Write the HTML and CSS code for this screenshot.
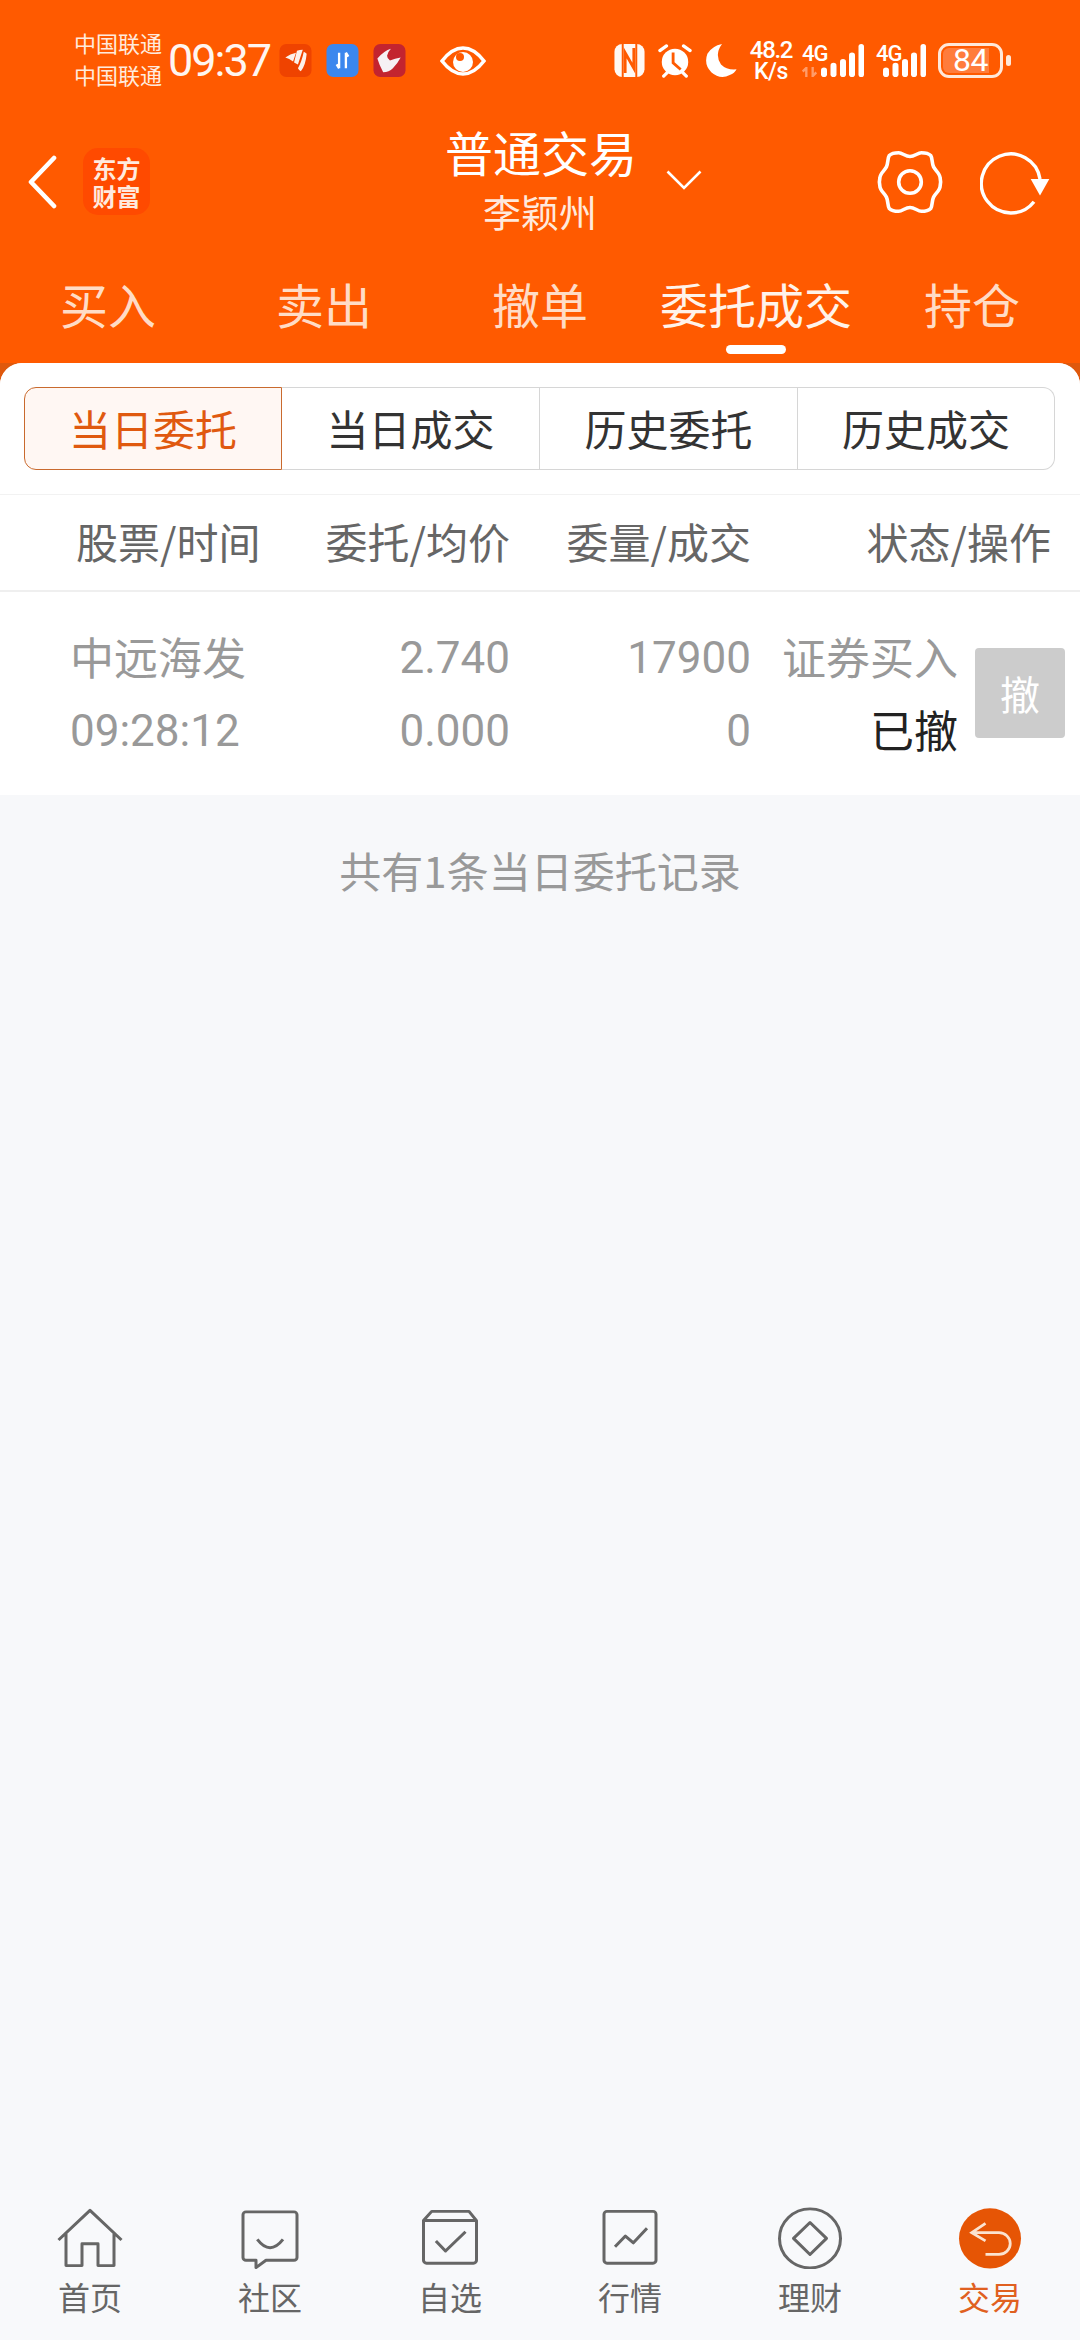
FILE: index.html
```html
<!DOCTYPE html>
<html lang="zh-CN">
<head>
<meta charset="utf-8">
<title>普通交易</title>
<link rel="stylesheet" href="styles.css">
</head>
<body>
<div class="app">
  <header class="top">
    <div class="status">
      <div class="carrier"><span>中国联通</span><span>中国联通</span></div>
      <div class="clock">09:37</div>
      <svg class="app-icon first" viewBox="0 0 33 34"><rect width="33" height="34" rx="7" fill="#ef4300"/><path d="M6 14Q11 10 17 9L14 18Q10 15 6 14ZM18 7Q21 6 24 6L19 21Q17 20 15 19ZM25 8Q27 9 28 10 27 22 22 28 20 27 19 25 23 18 25 8Z" fill="#fdf1ea"/></svg>
      <svg class="app-icon" viewBox="0 0 33 34"><rect width="33" height="34" rx="7" fill="#3b87ee"/><path d="M13 9V25M13 25L10.5 21M20 25V9M20 9L22.5 13" stroke="#fff" stroke-width="2.4" fill="none"/></svg>
      <svg class="app-icon" viewBox="0 0 33 34"><rect width="33" height="34" rx="7" fill="#c3242f"/><path d="M18 5Q11 7 4 15 6 22 10 29 16 29 20 25 25 20 28 14 22 15 17 17 14 15 14 12 15 8 18 5Z" fill="#f6f1f4"/></svg>
      <svg class="eye" viewBox="0 0 46 32"><path d="M2 16Q12 3 23 3T44 16Q34 29 23 29T2 16Z" fill="none" stroke="#fff" stroke-width="3.6"/><circle cx="23" cy="17" r="10" fill="#fff"/><circle cx="20" cy="12" r="4" fill="#ff5a00"/></svg>
      <div class="status-right">
        <svg class="nfc" viewBox="0 0 31 34"><rect width="31" height="34" rx="8" fill="#fff8f3"/><path d="M8.5 0V34M22.5 0V34" stroke="#ff5a00" stroke-width="2"/><path d="M11 30V9L20 25V4" stroke="#ff5a00" stroke-width="3" fill="none"/></svg>
        <svg class="alarm" viewBox="0 0 36 36"><circle cx="18" cy="19" r="14" fill="#fff"/><path d="M16 9V20L24 27" stroke="#ff5a00" stroke-width="3" fill="none"/><path d="M2 7L9 2M34 7L27 2M6 34L10 30M30 34L26 30" stroke="#fff" stroke-width="3.4" stroke-linecap="round"/></svg>
        <svg class="moon" viewBox="0 0 33 36"><path d="M17 1Q7 3 2 11 -2 22 6 30 15 38 25 33 30 31 32 27 22 28 16 22 9 12 17 1Z" fill="#fff"/></svg>
        <div class="speed"><span>48.2</span><span>K/s</span></div>
        <div class="signal first-signal">
          <div class="net"><span class="g4">4G</span><svg class="updown" viewBox="0 0 15 11"><path d="M4 11V1L0 5M11 0V10L15 6" stroke="#ff9c6a" stroke-width="2.6" fill="none"/></svg></div>
          <svg class="bars" viewBox="0 0 43 35" preserveAspectRatio="none"><rect y="25" width="6" height="10" rx="3"/><rect x="9.5" y="20" width="6" height="15" rx="3"/><rect x="19" y="16" width="6" height="19" rx="3"/><rect x="28" y="9" width="6" height="26" rx="3"/><rect x="37.500" y="0" width="5.500" height="35" rx="2.700"/></svg>
        </div>
        <div class="signal second-signal">
          <div class="net"><span class="g4">4G</span></div>
          <svg class="bars" viewBox="0 0 43 35" preserveAspectRatio="none"><rect y="25" width="6" height="10" rx="3"/><rect x="9.5" y="20" width="6" height="15" rx="3"/><rect x="19" y="16" width="6" height="19" rx="3"/><rect x="28" y="9" width="6" height="26" rx="3"/><rect x="37.500" y="0" width="5.500" height="35" rx="2.700"/></svg>
        </div>
        <div class="battery"><span>84</span></div>
        <div class="nub"></div>
      </div>
    </div>
    <nav class="bar">
      <div class="bar-left">
        <svg class="back" viewBox="0 0 31 54"><path d="M27 3L4 27L27 51" fill="none" stroke="#fff" stroke-width="4.600" stroke-linecap="round" stroke-linejoin="round"/></svg>
        <div class="logo"><span>东方</span><span>财富</span></div>
      </div>
      <div class="title"><div class="title-main">普通交易</div><div class="title-sub">李颖州</div></div>
      <div class="bar-right">
        <svg class="caret" viewBox="0 0 36 20"><path d="M1.500 1.500L18 18L34.500 1.500" fill="none" stroke="#fff" stroke-width="2.600"/></svg>
        <div class="actions">
          <svg class="gear" viewBox="0 0 70 70"><path d="M35 8C40 8 43 4 47 4C51 4 55 5 57 7C59 10 58 15 60 19C62 23 67 26 67 31C67.500 33 67.500 37 67 39C67 44 62 47 60 51C58 55 59 60 57 63C55 65 51 66 47 66C43 66 40 62 35 62C30 62 27 66 23 66C19 66 15 65 13 63C11 60 12 55 10 51C8 47 3 44 3 39C2.500 37 2.500 33 3 31C3 26 8 23 10 19C12 15 11 10 13 7C15 5 19 4 23 4C27 4 30 8 35 8Z" fill="none" stroke="#fff" stroke-width="3.800" stroke-linejoin="round"/><circle cx="35" cy="35" r="12" fill="none" stroke="#fff" stroke-width="3.800"/></svg>
          <svg class="refresh" viewBox="0 0 74 70"><path d="M54 54.700A29.500 29.500 0 1 1 60 32" fill="none" stroke="#fff" stroke-width="3.400"/><path d="M50.700 32H69.300L60 48.500Z" fill="#fff"/></svg>
        </div>
      </div>
    </nav>
    <div class="tabs">
      <div class="tab">买入</div>
      <div class="tab">卖出</div>
      <div class="tab">撤单</div>
      <div class="tab active">委托成交<i class="marker"></i></div>
      <div class="tab">持仓</div>
    </div>
  </header>

  <main class="under">
    <div class="panel">
      <div class="segment-wrap">
        <div class="segment">
          <div class="seg on">当日委托</div>
          <div class="seg">当日成交</div>
          <div class="seg">历史委托</div>
          <div class="seg">历史成交</div>
        </div>
      </div>
      <div class="thead">
        <div>股票/时间</div>
        <div class="r">委托/均价</div>
        <div class="r">委量/成交</div>
        <div class="r">状态/操作</div>
      </div>
      <div class="trow">
        <div class="cell"><span>中远海发</span><span class="num">09:28:12</span></div>
        <div class="cell r"><span class="num">2.740</span><span class="num">0.000</span></div>
        <div class="cell r"><span class="num">17900</span><span class="num">0</span></div>
        <div class="cell r"><span>证券买入</span><span class="dark">已撤</span></div>
        <div class="cancel">撤</div>
      </div>
      <div class="note">共有1条当日委托记录</div>
    </div>
  </main>

  <footer class="dock">
    <div class="dock-item">
      <svg viewBox="0 0 72 64" preserveAspectRatio="none"><path d="M4.500 34L36 3.500L67.500 34M12 27V60.500H28V38H44V60.500H60V27" class="ln"/></svg>
      <span>首页</span>
    </div>
    <div class="dock-item">
      <svg viewBox="0 0 72 64" preserveAspectRatio="none"><path d="M12 5H60A3 3 0 0 1 63 8V52A3 3 0 0 1 60 55H32L22 62.500V55H12A3 3 0 0 1 9 52V8A3 3 0 0 1 12 5Z" class="ln"/><path d="M23.300 33.400Q36 50.600 49 33.400" class="ln"/></svg>
      <span>社区</span>
    </div>
    <div class="dock-item">
      <svg viewBox="0 0 72 64" preserveAspectRatio="none"><path d="M9.500 14L17.700 4.500H55L62.500 14V55A3 3 0 0 1 59.500 58H12.500A3 3 0 0 1 9.500 55ZM9.500 14H62.500M21.900 35L31.500 45.500L51.500 25.500" class="ln"/></svg>
      <span>自选</span>
    </div>
    <div class="dock-item">
      <svg viewBox="0 0 72 64" preserveAspectRatio="none"><rect x="10" y="4.500" width="52" height="53.500" rx="3" class="ln"/><path d="M21 41L31.400 30L39.400 37L53 22" class="ln"/></svg>
      <span>行情</span>
    </div>
    <div class="dock-item">
      <svg viewBox="0 0 72 64" preserveAspectRatio="none"><circle cx="36" cy="32.400" r="30.500" class="ln"/><path d="M36 16L52.500 32.400L36 49L19.500 32.400Z" class="ln"/></svg>
      <span>理财</span>
    </div>
    <div class="dock-item current">
      <svg viewBox="0 0 72 64" preserveAspectRatio="none"><circle cx="36" cy="32.400" r="31" fill="#e65505"/><path d="M31.500 17L17.700 26.500L31.500 35M17.700 26.500H45A11.200 11.200 0 0 1 45 49H31.500" fill="none" stroke="#fbe3d0" stroke-width="2.800"/></svg>
      <span>交易</span>
    </div>
  </footer>
</div>
</body>
</html>
```
FILE: styles.css
```css
* { box-sizing: border-box; margin: 0; padding: 0; }
html, body { width: 1080px; height: 2340px; overflow: hidden; }
body { font-family: "Noto Sans CJK SC", "Noto Sans", sans-serif; background: #f8f9fb; }
svg { display: block; flex: none; }
.app { width: 1080px; height: 2340px; display: flex; flex-direction: column; }

.top { background: #ff5a00; color: #fff; }

.status { height: 121px; padding-left: 74px; display: flex; align-items: center; }
.carrier { width: 88px; padding-bottom: 6px; display: flex; flex-direction: column; font-size: 22px; line-height: 32px; color: #ffeadd; white-space: nowrap; }
.clock { margin-left: 6px; width: 111px; font-family: Roboto, sans-serif; font-weight: 400; font-size: 45px; letter-spacing: -2px; color: #fff6f0; }
.app-icon { width: 33px; height: 33px; margin-left: 14px; }
.app-icon.first { margin-left: 0; }
.eye { width: 46px; height: 32px; margin-left: 34px; }
.status-right { margin-left: 128px; display: flex; align-items: center; }
.nfc { width: 31px; height: 33px; }
.alarm { width: 36px; height: 34px; margin-left: 12px; }
.moon { width: 33px; height: 35px; margin-left: 12px; }
.speed { width: 42px; margin-left: 12px; display: flex; flex-direction: column; align-items: center; font-family: Roboto, sans-serif; font-weight: 500; white-space: nowrap; }
.speed span:first-child { font-size: 24px; line-height: 21px; letter-spacing: -1.3px; }
.speed span:last-child { font-size: 23px; line-height: 21px; letter-spacing: -.5px; }
.signal { display: flex; align-items: flex-end; height: 33px; }
.first-signal { margin-left: 10px; }
.second-signal { margin-left: 12px; }
.net { display: flex; flex-direction: column; width: 19px; height: 33px; white-space: nowrap; }
.second-signal .net { width: 7px; }
.g4 { font-family: Roboto, sans-serif; font-weight: 500; font-size: 22px; line-height: 20px; letter-spacing: -1px; height: 23px; }
.updown { width: 15px; height: 10px; }
.bars { width: 43px; height: 33px; fill: #fff; }
.battery { margin-left: 12px; width: 65px; height: 35px; border: 3px solid #ffe8da; border-radius: 11px; padding: 2px; display: flex; }
.battery span { flex: 1; border-radius: 6px 0 0 6px; background: linear-gradient(90deg, #ff7c3c 84%, transparent 84%); font-family: Roboto, sans-serif; font-size: 32px; line-height: 25px; text-align: center; letter-spacing: -.5px; color: #fff; }
.nub { margin-left: 3px; width: 5px; height: 11px; border-radius: 2.5px; background: #ffe8da; }

.bar { height: 121px; display: grid; grid-template-columns: 1fr 190px 1fr; grid-template-rows: 121px; }
.bar-left { display: flex; align-items: center; padding-left: 27px; }
.back { width: 31px; height: 54px; }
.logo { margin-left: 25px; width: 67px; height: 67px; border-radius: 15px; background: #ff4a00; display: flex; flex-direction: column; align-items: center; justify-content: center; font-weight: 700; font-size: 24px; line-height: 28px; color: #ffeadf; }
.title { text-align: center; white-space: nowrap; }
.title-main { font-size: 48px; line-height: 60px; }
.title-sub { font-size: 38px; line-height: 60px; color: #ffe9dc; }
.bar-right { display: flex; align-items: center; padding: 0 26px 0 31px; }
.caret { width: 36px; height: 20px; margin-top: -4px; }
.actions { margin-left: auto; display: flex; align-items: center; gap: 37px; }
.gear { width: 66px; height: 66px; }
.refresh { width: 74px; height: 70px; }

.tabs { height: 121px; display: grid; grid-template-columns: repeat(5, 216px); }
.tab { padding-top: 35px; display: flex; flex-direction: column; align-items: center; font-size: 48px; line-height: 52px; color: #ffdcc6; white-space: nowrap; }
.tab.active { color: #fff3ea; }
.marker { width: 60px; height: 9px; margin-top: 16px; border-radius: 5px; background: #fff; }

.under { flex: 1; background: #df580c; display: flex; }
.panel { flex: 1; background: #f7f8fa; border-radius: 22px 22px 0 0; overflow: hidden; display: flex; flex-direction: column; }
.segment-wrap { background: #fff; padding: 24px 0 24px 24px; border-bottom: 1px solid #f2f2f2; }
.segment { display: grid; grid-template-columns: 258px 258px 258px 257px; height: 83px; }
.seg { padding-bottom: 3px; display: flex; align-items: center; justify-content: center; font-size: 42px; color: #333; border: 1.5px solid #d6d6d6; border-left: 0; }
.seg.on { border: 1.5px solid #c96a2e; background: #fff7f3; color: #e0590f; border-radius: 12px 0 0 12px; }
.seg:last-child { border-radius: 0 12px 12px 0; }
.thead { height: 97px; padding-bottom: 5px; background: #fff; border-bottom: 2px solid #efefef; display: grid; grid-template-columns: 260px 250px 241px 300px; align-items: center; font-size: 42px; color: #666; white-space: nowrap; }
.thead > div:first-child { padding-left: 76px; }
.r { text-align: right; }
.trow { background: #fff; padding: 28px 15px 29px 70px; display: grid; grid-template-columns: 190px 250px 241px 207px 90px; font-size: 44px; line-height: 73px; color: #999; white-space: nowrap; }
.cell { display: flex; flex-direction: column; }
.num { font-family: Roboto, sans-serif; line-height: 77px; margin-bottom: -4px; }
.dark { color: #222; }
.cancel { align-self: center; margin-left: 17px; width: 90px; height: 90px; border-radius: 4px; background: #ccc; color: #fff; font-size: 40px; line-height: 90px; text-align: center; }
.note { text-align: center; margin-top: 45px; font-size: 42px; line-height: 60px; color: #999; }

.dock { height: 150px; padding-top: 17px; background: #f8f9fb; display: grid; grid-template-columns: repeat(6, 180px); }
.dock-item { display: flex; flex-direction: column; align-items: center; font-size: 32px; line-height: 40px; color: #666; }
.dock-item svg { width: 72px; height: 62px; margin-bottom: 7px; }
.dock-item.current { color: #e06020; }
.ln { fill: none; stroke: #666; stroke-width: 3; stroke-linejoin: round; }
```
